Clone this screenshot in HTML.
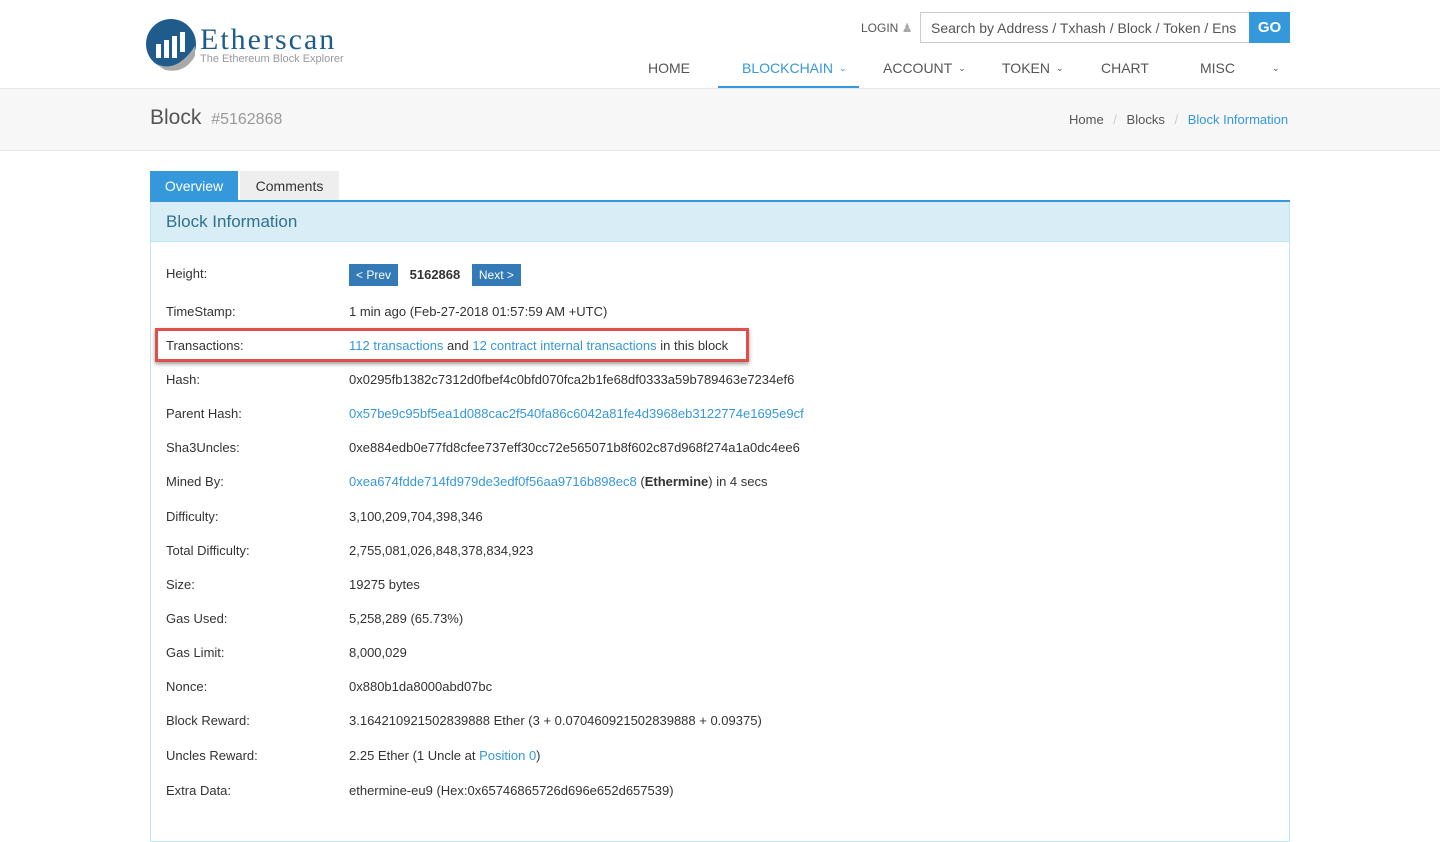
<!DOCTYPE html>
<html><head><meta charset="utf-8"><style>
*{margin:0;padding:0;box-sizing:border-box}
body{width:1440px;height:826px;overflow:hidden;background:#fff;font-family:"Liberation Sans",Arial,sans-serif;font-size:13px;color:#333;position:relative}
.a{position:absolute;white-space:nowrap}
a,.l{color:#3498db;text-decoration:none}
.nav{font-size:14px;color:#555;top:60px}
.car{font-size:9px;margin-left:6px;position:relative;top:-2px}
.row{position:absolute;left:166px;font-size:13px}
.val{position:absolute;left:349px;white-space:nowrap}
.btn{display:inline-block;background:#337ab7;color:#fff;padding:4px 7px;font-size:12px}
</style></head><body>
<svg class="a" style="left:145px;top:16px" width="52" height="56" viewBox="0 0 52 56">
<circle cx="26" cy="28" r="25" fill="#1f5c8c"/>
<path d="M8 46 Q30 60 50 30 L50 40 Q40 58 20 54 Z" fill="#a9a9a9"/>
<rect x="11" y="28" width="5" height="14" fill="#fff"/><rect x="19" y="24" width="5" height="18" fill="#fff"/><rect x="27" y="20" width="5" height="22" fill="#fff"/><rect x="35" y="16" width="5" height="20" fill="#fff"/>
</svg>
<div class="a" style="left:200px;top:23px;font-family:'Liberation Serif',serif;font-size:30px;color:#1f5c8c;letter-spacing:2px">Etherscan</div>
<div class="a" style="left:200px;top:53px;font-size:11px;color:#999">The Ethereum Block Explorer</div>
<div class="a" style="left:861px;top:21px;font-size:12px;color:#555">LOGIN <span style="color:#aaa">&#9823;</span></div>
<div class="a" style="left:920px;top:12px;width:330px;height:31px;border:1px solid #ccc;padding:7px 10px;font-size:14px;color:#555">Search by Address / Txhash / Block / Token / Ens</div>
<div class="a" style="left:1249px;top:12px;width:41px;height:31px;background:#3498db;color:#fff;font-size:15px;font-weight:bold;text-align:center;line-height:31px">GO</div>
<div class="a nav" style="left:648px">HOME</div>
<div class="a nav" style="left:742px;color:#3498db">BLOCKCHAIN<span class="car">&#8964;</span></div>
<div class="a" style="left:718px;top:86px;width:141px;height:3px;background:#3498db"></div>
<div class="a nav" style="left:883px">ACCOUNT<span class="car">&#8964;</span></div>
<div class="a nav" style="left:1002px">TOKEN<span class="car">&#8964;</span></div>
<div class="a nav" style="left:1101px">CHART</div>
<div class="a nav" style="left:1200px">MISC</div>
<div class="a nav" style="left:1266px"><span class="car">&#8964;</span></div>
<div class="a" style="left:0;top:88px;width:1440px;height:63px;background:#f7f7f7;border-top:1px solid #e5e5e5;border-bottom:1px solid #e8e8e8"></div>
<div class="a" style="left:150px;top:106px;font-size:21px;color:#555">Block <span style="font-size:16px;color:#999;margin-left:4px">#5162868</span></div>
<div class="a" style="left:1069px;top:112px;font-size:13px;color:#555">Home <span style="color:#ccc;margin:0 6px">/</span> Blocks <span style="color:#ccc;margin:0 6px">/</span> <span class="l">Block Information</span></div>
<div class="a" style="left:150px;top:171px;width:88px;height:30px;background:#3498db;color:#fff;font-size:14px;text-align:center;line-height:30px">Overview</div>
<div class="a" style="left:240px;top:171px;width:99px;height:30px;background:#eee;color:#333;font-size:14px;text-align:center;line-height:30px">Comments</div>
<div class="a" style="left:150px;top:200px;width:1140px;height:2px;background:#3498db"></div>
<div class="a" style="left:150px;top:202px;width:1140px;height:640px;border:1px solid #bce8f1;border-top:none"></div>
<div class="a" style="left:151px;top:202px;width:1138px;height:40px;background:#d9edf7;border-bottom:1px solid #bce8f1;color:#31708f;font-size:17px;padding:10px 15px">Block Information</div>
<div class="row" style="top:266px">Height:<span class="val" style="left:183px;top:-2px"><span class="btn">&lt; Prev</span> <b style="margin:0 8px">5162868</b> <span class="btn">Next &gt;</span></span></div>
<div class="row" style="top:304px">TimeStamp:<span class="val" style="left:183px">1 min ago (Feb-27-2018 01:57:59 AM +UTC)</span></div>
<div class="a" style="left:155px;top:328px;width:594px;height:34px;border:3px solid #e0504a;box-shadow:0 2px 4px rgba(0,0,0,.4)"></div>
<div class="row" style="top:338px">Transactions:<span class="val" style="left:183px"><span class="l">112 transactions</span> and <span class="l">12 contract internal transactions</span> in this block</span></div>
<div class="row" style="top:372px">Hash:<span class="val" style="left:183px">0x0295fb1382c7312d0fbef4c0bfd070fca2b1fe68df0333a59b789463e7234ef6</span></div>
<div class="row" style="top:406px">Parent Hash:<span class="val l" style="left:183px">0x57be9c95bf5ea1d088cac2f540fa86c6042a81fe4d3968eb3122774e1695e9cf</span></div>
<div class="row" style="top:440px">Sha3Uncles:<span class="val" style="left:183px">0xe884edb0e77fd8cfee737eff30cc72e565071b8f602c87d968f274a1a0dc4ee6</span></div>
<div class="row" style="top:474px">Mined By:<span class="val" style="left:183px"><span class="l">0xea674fdde714fd979de3edf0f56aa9716b898ec8</span> (<b>Ethermine</b>) in 4 secs</span></div>
<div class="row" style="top:509px">Difficulty:<span class="val" style="left:183px">3,100,209,704,398,346</span></div>
<div class="row" style="top:543px">Total Difficulty:<span class="val" style="left:183px">2,755,081,026,848,378,834,923</span></div>
<div class="row" style="top:577px">Size:<span class="val" style="left:183px">19275 bytes</span></div>
<div class="row" style="top:611px">Gas Used:<span class="val" style="left:183px">5,258,289 (65.73%)</span></div>
<div class="row" style="top:645px">Gas Limit:<span class="val" style="left:183px">8,000,029</span></div>
<div class="row" style="top:679px">Nonce:<span class="val" style="left:183px">0x880b1da8000abd07bc</span></div>
<div class="row" style="top:713px">Block Reward:<span class="val" style="left:183px">3.164210921502839888 Ether (3 + 0.070460921502839888 + 0.09375)</span></div>
<div class="row" style="top:748px">Uncles Reward:<span class="val" style="left:183px">2.25 Ether (1 Uncle at <span class="l">Position 0</span>)</span></div>
<div class="row" style="top:783px">Extra Data:<span class="val" style="left:183px">ethermine-eu9 (Hex:0x65746865726d696e652d657539)</span></div>
</body></html>
